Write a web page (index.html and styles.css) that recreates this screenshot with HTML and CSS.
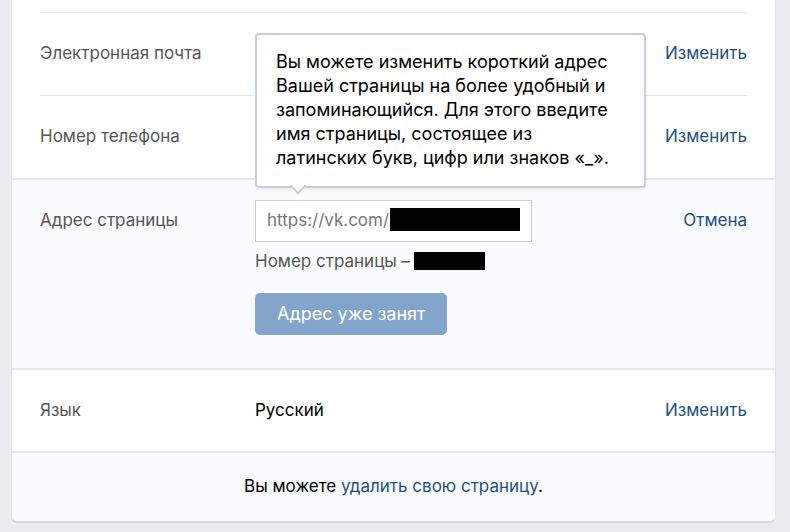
FILE: index.html
```html
<!DOCTYPE html>
<html lang="ru">

<head>
    <meta charset="UTF-8">
    <meta name="viewport" content="width=device-width, initial-scale=1.0">
    <title>Настройки</title>
    <link rel="stylesheet" href="styles.css">
</head>

<body>
    <main class="settings">
        <div class="group">
            <div class="row">
                <div class="label">Электронная почта</div>
                <div class="value"></div>
                <a class="action" href="#">Изменить</a>
            </div>
            <div class="row">
                <div class="label">Номер телефона</div>
                <div class="value"></div>
                <a class="action" href="#">Изменить</a>
            </div>
        </div>

        <form class="section section-open">
            <label class="label" for="address">Адрес страницы</label>
            <div class="value">
                <div class="address-box">
                    <label class="prefix" for="address">https://vk.com/</label>
                    <input class="address" type="text" id="address" aria-describedby="hint">
                    <div class="tooltip" id="hint" role="tooltip">
                        Вы можете изменить короткий адрес<br>
                        Вашей страницы на более удобный и<br>
                        запоминающийся. Для этого введите<br>
                        имя страницы, состоящее из<br>
                        латинских букв, цифр или знаков «_».
                    </div>
                </div>
                <div class="page-number">Номер страницы –<span class="hidden-number"></span></div>
                <button class="submit" type="button">Адрес уже занят</button>
            </div>
            <a class="action" href="#">Отмена</a>
        </form>

        <div class="section">
            <div class="label">Язык</div>
            <div class="value">Русский</div>
            <a class="action" href="#">Изменить</a>
        </div>

        <footer class="footer">
            Вы можете <a href="#">удалить свою страницу</a>.
        </footer>
    </main>
</body>

</html>
```
FILE: styles.css
```css
* {
    box-sizing: border-box;
}

body {
    margin: 0;
    padding: 0 14px 9px 11px;
    background-color: #ebecf0;
    color: #000;
    font-family: Inter, Roboto, sans-serif;
    font-size: 17px;
    line-height: 24px;
}

a {
    color: #1f4f82;
    text-decoration: none;
}

a:hover {
    text-decoration: underline;
}

.settings {
    background-color: #fff;
    border: 1px solid #e1e4e8;
    border-top: none;
    border-bottom: 2px solid #d7d9de;
    border-radius: 0 0 6px 6px;
}

.group {
    padding: 12px 28px 0;
}

.row,
.section {
    display: flex;
}

.row {
    padding: 28px 0 30px;
    border-top: 1px solid #e4e6e9;
}

.section {
    padding: 28px 28px 29px;
    border-top: 2px solid #e7e8ec;
}

.section-open {
    padding-bottom: 33px;
    background-color: #fafbfc;
}

.label {
    width: 215px;
    flex-shrink: 0;
    color: #555;
}

.value {
    flex: 1;
}

.section-open .value {
    margin-top: -8px;
}

.address-box {
    position: relative;
    display: flex;
    width: 277px;
    height: 42px;
    padding: 7px 11px 9px;
    background-color: #fff;
    border: 1px solid #c5ccd5;
}

.prefix {
    color: #777;
}

.address {
    flex: 1;
    min-width: 0;
    height: 23px;
    margin-left: 1px;
    padding: 0 4px;
    border: none;
    background-color: #000;
    color: #000;
    font: inherit;
}

.tooltip {
    position: absolute;
    left: -1px;
    bottom: 53px;
    width: 391px;
    padding: 15px 19px 16px;
    background-color: #fff;
    border: 2px solid #c5d0db;
    border-radius: 4px;
    box-shadow: 0 2px 3px rgba(0, 0, 0, 0.06);
    font-size: 18px;
    white-space: nowrap;
}

.tooltip::after {
    content: "";
    position: absolute;
    left: 35px;
    bottom: -6px;
    width: 10px;
    height: 10px;
    background-color: #fff;
    border: solid #c5d0db;
    border-width: 0 2px 2px 0;
    transform: rotate(45deg);
}

.page-number {
    display: flex;
    align-items: center;
    gap: 4px;
    margin-top: 7px;
    color: #555;
}

.hidden-number {
    width: 71px;
    height: 18px;
    background-color: #000;
}

.submit {
    display: block;
    margin-top: 20px;
    padding: 9px 22px;
    border: none;
    border-radius: 5px;
    background-color: #84a5cb;
    color: #fff;
    font: inherit;
    font-size: 18px;
    cursor: pointer;
}

.submit:hover {
    background-color: #7b9dc5;
}

.footer {
    padding: 21px 28px 23px;
    border-top: 2px solid #e7e8ec;
    border-radius: 0 0 6px 6px;
    background-color: #fafbfc;
    text-align: center;
}
```
